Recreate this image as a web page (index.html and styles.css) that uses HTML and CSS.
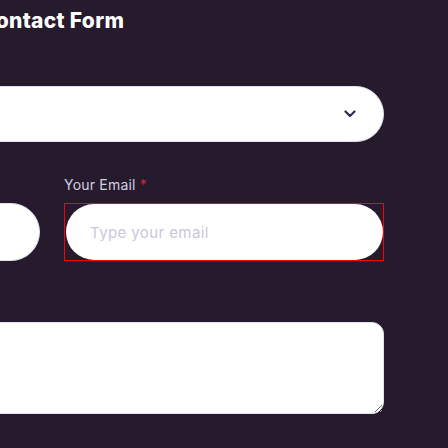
FILE: index.html
```html
<!DOCTYPE html>
<html lang="en">
<head>
<meta charset="utf-8">
<title>Contact Form</title>
<link rel="stylesheet" href="styles.css">
</head>
<body>
<form class="form">
  <h1 class="title">Contact Form</h1>
  <div class="field">
    <label class="label">Subject <span class="req">*</span></label>
    <div class="select">
      <svg class="chevron" width="12" height="8" viewBox="0 0 12 8"><path d="M1.5 1.5 L6 6 L10.5 1.5" fill="none" stroke="#2c2d56" stroke-width="2.2" stroke-linecap="round" stroke-linejoin="round"/></svg>
    </div>
  </div>
  <div class="row">
    <div class="field">
      <label class="label">Your Name <span class="req">*</span></label>
      <input class="input" type="text" placeholder="Type your name">
    </div>
    <div class="field">
      <label class="label">Your Email <span class="req">*</span></label>
      <div class="error-wrap">
        <input class="input input-inner" type="email" placeholder="Type your email">
      </div>
    </div>
  </div>
  <div class="field">
    <label class="label">Message <span class="req">*</span></label>
    <textarea class="textarea"></textarea>
  </div>
  <div class="actions">
    <button class="button" type="button">Send Message</button>
  </div>
</form>
</body>
</html>
```
FILE: styles.css
```css
html, body {
  margin: 0;
  padding: 0;
  background: #261a2d;
  overflow: hidden;
  height: 448px;
}
.form {
  width: 664px;
  margin-left: -280px;
  display: flex;
  flex-direction: column;
  gap: 32px;
  font-family: "Inter", "Noto Sans", sans-serif;
}
.title {
  margin: 6px 0 -11px;
  text-align: center;
  color: #ffffff;
  font-size: 21px;
  line-height: 30px;
  font-weight: 800;
  letter-spacing: 0.3px;
}
.field {
  display: flex;
  flex-direction: column;
}
.label {
  color: #d2cfe2;
  font-size: 14px;
  line-height: 21px;
  margin-bottom: 8px;
  letter-spacing: 0.2px;
}
.req {
  color: #d3243c;
}
.row {
  display: grid;
  grid-template-columns: 320px 320px;
  gap: 24px;
}
.select {
  box-sizing: border-box;
  height: 56px;
  background: #ffffff;
  border: 1px solid #e0e0ea;
  border-radius: 28px;
  display: flex;
  align-items: center;
  justify-content: flex-end;
  padding-right: 27px;
}
.input {
  box-sizing: border-box;
  height: 58px;
  width: 100%;
  background: #ffffff;
  border: 1px solid #e0e0ea;
  border-radius: 29px;
  padding: 0 24px;
  font-family: inherit;
  font-size: 15px;
  color: #222;
  outline: none;
}
.input::placeholder {
  color: #c8c7dc;
  letter-spacing: 0.4px;
}
.error-wrap {
  box-sizing: border-box;
  height: 58px;
  border: 1px solid #ff0000;
  display: flex;
}
.input-inner {
  height: 56px;
  border-radius: 28px;
  border: none;
  margin-left: 1px;
}
.textarea {
  box-sizing: border-box;
  height: 92px;
  background: #ffffff;
  border: 1px solid #e0e0ea;
  border-radius: 12px;
  resize: vertical;
  font-family: inherit;
  outline: none;
  display: block;
}
.actions {
  display: flex;
  justify-content: flex-end;
  padding-right: 19px;
  margin-top: 5px;
}
.button {
  width: 148px;
  height: 56px;
  background: #ffffff;
  border: 1px solid #d8d8e2;
  border-radius: 28px;
  font-family: inherit;
  font-size: 14px;
  color: #261a2d;
}
```
